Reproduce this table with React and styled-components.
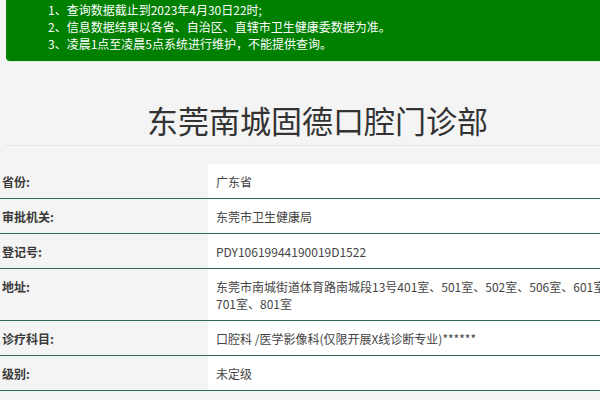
import React from "react";
import styled, { createGlobalStyle } from "styled-components";

const Global = createGlobalStyle`
  html, body { margin: 0; padding: 0; background: #f4f4f4; overflow: hidden; }
  body { font-family: "Noto Sans CJK SC", "Noto Sans", sans-serif; color: #333; }
`;

const Page = styled.div`
  width: 630px;
`;

const Notice = styled.div`
  margin: 0 6px;
  padding: 1px 0 9px 42px;
  background: #008000;
  color: #fff;
  font-size: 12px;
  line-height: 17px;
  border-radius: 0 0 4px 4px;
  box-shadow: 0 1px 0 #d8ecd8;
`;

const NoticeLine = styled.div`
  white-space: nowrap;
`;

const Title = styled.h1`
  margin: 37px 0 0 5px;
  padding-bottom: 4px;
  border-bottom: 1px solid #e6e6e6;
  font-size: 31px;
  line-height: 43px;
  font-weight: normal;
  color: #333;
  text-align: center;
`;

const Table = styled.div`
  margin-top: 18px;
`;

const Row = styled.div`
  display: grid;
  grid-template-columns: 208px 1fr;
  border-bottom: 1px solid #2f6c5a;
`;

const Label = styled.div`
  padding: 9px 2px 8px;
  font-size: 12px;
  line-height: 17px;
  font-weight: bold;
  color: #3a3a3a;
`;

const Value = styled.div`
  padding: 9px 8px 8px;
  background: #fff;
  font-size: 12px;
  line-height: 17px;
  color: #444;
`;

const rows = [
  ["省份:", "广东省"],
  ["审批机关:", "东莞市卫生健康局"],
  ["登记号:", "PDY10619944190019D1522"],
  ["地址:", "东莞市南城街道体育路南城段13号401室、501室、502室、506室、601室、701室、801室"],
  ["诊疗科目:", "口腔科 /医学影像科(仅限开展X线诊断专业)******"],
  ["级别:", "未定级"],
];

export default function App() {
  return (
    <Page>
      <Global />
      <Notice>
        <NoticeLine>1、查询数据截止到2023年4月30日22时;</NoticeLine>
        <NoticeLine>2、信息数据结果以各省、自治区、直辖市卫生健康委数据为准。</NoticeLine>
        <NoticeLine>3、凌晨1点至凌晨5点系统进行维护，不能提供查询。</NoticeLine>
      </Notice>
      <Title>东莞南城固德口腔门诊部</Title>
      <Table>
        {rows.map(([k, v]) => (
          <Row key={k}>
            <Label>{k}</Label>
            <Value>{v}</Value>
          </Row>
        ))}
      </Table>
    </Page>
  );
}
